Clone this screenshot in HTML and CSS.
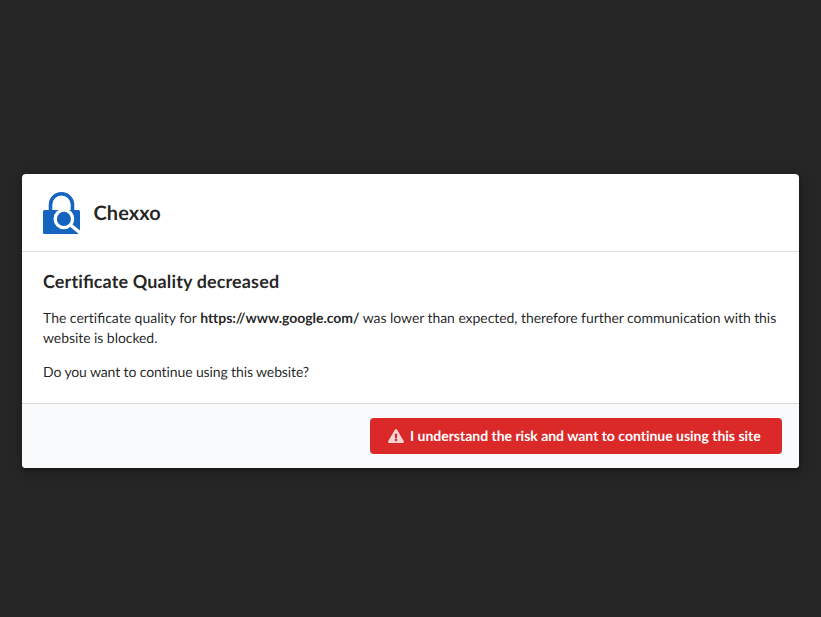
FILE: index.html
```html
<!DOCTYPE html>
<html lang="en">
<head>
<meta charset="utf-8">
<title>Chexxo</title>
<link rel="stylesheet" href="styles.css">
</head>
<body>
<main class="modal">
  <header class="header">
    <svg class="logo" viewBox="0 0 37 43" aria-hidden="true">
      <path d="M7.500 20V13.700a11 11 0 0 1 22 0v7" fill="none" stroke="#1565c0" stroke-width="3.600"/>
      <rect y="19" width="37" height="24" rx="1.500" fill="#1565c0"/>
      <circle cx="20.900" cy="27.900" r="8.700" fill="#1565c0" stroke="#fff" stroke-width="3.300"/>
      <path d="M27 33.500l11 9" stroke="#fff" stroke-width="3.500"/>
    </svg>
    <h1 class="brand">Chexxo</h1>
  </header>
  <section class="content">
    <h2 class="title">Certi<span class="lig">fi</span>cate Quality decreased</h2>
    <p class="reason">The certi<span class="lig">fi</span>cate quality for <b>https://www.google.com/</b><span class="detail"> was lower than expected, therefore further communication with this website is blocked.</span></p>
    <p class="question">Do you want to continue using this website?</p>
  </section>
  <footer class="actions">
    <button class="button">
      <svg class="warn" viewBox="0 0 576 512" aria-hidden="true"><path fill="currentColor" d="M569.517 440.013C587.975 472.007 564.806 512 527.940 512H48.054c-36.937 0-59.999-40.055-41.577-71.987L246.423 23.985c18.467-32.009 64.720-31.951 83.154 0l239.940 416.028zM288 354c-25.405 0-46 20.595-46 46s20.595 46 46 46 46-20.595 46-46-20.595-46-46-46zm-43.673-165.346l7.418 136c.347 6.364 5.609 11.346 11.982 11.346h48.546c6.373 0 11.635-4.982 11.982-11.346l7.418-136c.375-6.874-5.098-12.654-11.982-12.654h-63.383c-6.884 0-12.356 5.780-11.981 12.654z"/></svg>
      <span>I understand the risk and want to continue using this site</span>
    </button>
  </footer>
</main>
</body>
</html>
```
FILE: styles.css
```css
* { box-sizing: border-box; }
body {
  margin: 0;
  min-height: 617px;
  padding: 174px 22px 149px;
  background: #262626;
  color: rgba(0, 0, 0, .87);
  font: 14px/20px Lato, sans-serif;
  font-variant-ligatures: no-common-ligatures;
  text-rendering: geometricPrecision;
}
.modal {
  height: 294px;
  background: #fff;
  border-radius: 4px;
  overflow: hidden;
  box-shadow: 1px 3px 3px 0 rgba(0, 0, 0, .2), 1px 3px 15px 2px rgba(0, 0, 0, .2);
}
.header {
  display: flex;
  height: 78px;
  padding: 17px 21px 0;
  border-bottom: 1px solid rgba(34, 36, 38, .15);
}
.logo { width: 37px; height: 43px; }
.brand { margin: 8px 0 0 13.5px; font-size: 20px; line-height: 28px; letter-spacing: .08px; }
.content { height: 151px; padding: 18px 21px; }
.title { margin: 0 0 16px; font-size: 18px; line-height: 22px; letter-spacing: .13px; }
.lig { font-variant-ligatures: common-ligatures; letter-spacing: 0; }
p { margin: 0 0 14px; }
.reason { letter-spacing: -.02px; }
.reason b { letter-spacing: -.04px; }
.detail { letter-spacing: -.06px; }
.question { letter-spacing: -.115px; }
.actions {
  display: flex;
  justify-content: flex-end;
  height: 65px;
  padding: 14px 17px 14px;
  background: #f9fafb;
  border-top: 1px solid rgba(34, 36, 38, .15);
}
.button {
  display: flex;
  align-items: center;
  height: 36px;
  width: 412px;
  padding: 0 0 0 18px;
  border: 0;
  border-radius: 4px;
  background: #db2828;
  color: #fff;
  font: bold 14px/14px Lato, sans-serif;
  font-variant-ligatures: no-common-ligatures;
  letter-spacing: -.015px;
  text-rendering: geometricPrecision;
}
.warn { width: 16px; height: 14px; margin-right: 6px; opacity: .8; }
```
